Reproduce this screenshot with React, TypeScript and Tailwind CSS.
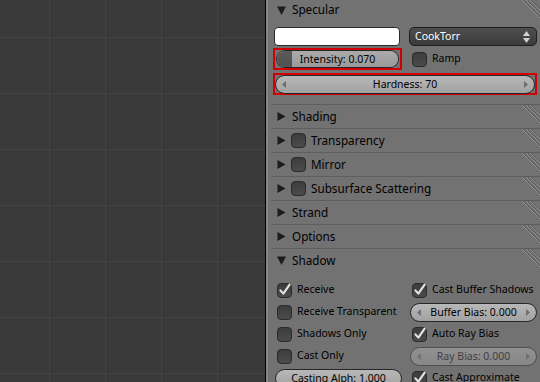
import React from "react";

function Tri({ open }: { open?: boolean }) {
  return (
    <svg width="9" height="9" viewBox="0 0 9 9" className="shrink-0">
      {open ? (
        <polygon points="0,0.5 9,0.5 4.5,9" fill="#1c1c1c" />
      ) : (
        <polygon points="0.5,0 8.5,4.5 0.5,9" fill="#1c1c1c" />
      )}
    </svg>
  );
}

function Hatch() {
  return (
    <svg width="18" height="19" viewBox="0 0 18 19" className="ml-auto shrink-0 self-start">
      {[0, 4, 8].map((x) => (
        <g key={x}>
          <line x1={x} y1="0" x2={x + 19} y2="19" stroke="#929292" strokeWidth="1" />
          <line x1={x + 1.2} y1="0" x2={x + 20.2} y2="19" stroke="#595959" strokeWidth="1" />
        </g>
      ))}
    </svg>
  );
}

function Check({ checked }: { checked?: boolean }) {
  return (
    <div className="relative h-[15px] w-[15px] shrink-0 rounded-[4px] border border-[#2a2a2a] bg-gradient-to-b from-[#3d3d3d] to-[#4b4b4b]">
      {checked ? (
        <svg
          width="15"
          height="15"
          viewBox="0 0 15 15"
          className="absolute -left-px -top-px overflow-visible"
        >
          <path
            d="M3.4 7.4 L6.4 10.6 L12.6 1.6"
            fill="none"
            stroke="#e6e6e6"
            strokeWidth="2.1"
            strokeLinecap="round"
            strokeLinejoin="round"
          />
        </svg>
      ) : null}
    </div>
  );
}

function Arrow({ dir }: { dir: "l" | "r" }) {
  return (
    <svg width="4" height="7" viewBox="0 0 4 7" className="shrink-0">
      <polygon points={dir === "l" ? "4,0 0,3.5 4,7" : "0,0 4,3.5 0,7"} fill="#6e6e6e" />
    </svg>
  );
}

function NumField({
  label,
  arrows = true,
  disabled,
  className = "",
}: {
  label: string;
  arrows?: boolean;
  disabled?: boolean;
  className?: string;
}) {
  return (
    <div
      className={[
        "flex h-[19px] items-center rounded-full border border-[#262626] bg-gradient-to-b from-[#b8b8b8] to-[#a2a2a2] px-[6px] text-[10.5px] text-black",
        disabled ? "opacity-45" : "",
        className,
      ].join(" ")}
    >
      {arrows ? <Arrow dir="l" /> : null}
      <span className="flex-1 whitespace-nowrap text-center leading-none">{label}</span>
      {arrows ? <Arrow dir="r" /> : null}
    </div>
  );
}

function Header({ title, open, check }: { title: string; open?: boolean; check?: boolean }) {
  return (
    <div className="flex h-[24px] items-center border-t border-[#5d5d5d] pl-[6px]">
      <Tri open={open} />
      {check ? (
        <>
          <div className="ml-[5px]">
            <Check />
          </div>
          <span className="ml-[5px] text-[11.7px] text-black">{title}</span>
        </>
      ) : (
        <span className="ml-[6px] text-[11.7px] text-black">{title}</span>
      )}
      <Hatch />
    </div>
  );
}

function CheckRow({ label, checked }: { label: string; checked?: boolean }) {
  return (
    <div className="flex h-[22px] items-center pl-[2px]">
      <Check checked={checked} />
      <span className="ml-[5px] whitespace-nowrap text-[10.5px] text-black">{label}</span>
    </div>
  );
}

export default function App() {
  return (
    <div className="flex h-[382px] w-[540px] overflow-hidden font-['Noto_Sans',sans-serif]">
      <div className="h-full w-[265px] shrink-0 bg-[#393939] bg-[linear-gradient(to_right,#444444_1px,transparent_1px),linear-gradient(to_bottom,#444444_1px,transparent_1px)] bg-[length:56px_56px] bg-[position:49px_37px]" />
      <div className="h-full w-px shrink-0 bg-black" />
      <div className="h-full w-[2px] shrink-0 bg-[#868686]" />

      <div className="h-full flex-1 bg-[#727272] pl-[3px]">
        {/* Specular */}
        <div className="flex h-[20px] items-center pl-[6px]">
          <Tri open />
          <span className="ml-[6px] text-[11.7px] text-black">Specular</span>
          <Hatch />
        </div>
        <div className="pb-[9px] pl-[3px] pt-[7px]">
          <div className="grid h-[19px] grid-cols-[126px_128px] gap-x-[9px]">
            <div className="rounded-[4px] border border-[#2a2a2a] bg-white" />
            <div className="flex items-center rounded-[5px] border border-[#1e1e1e] bg-gradient-to-b from-[#4e4e4e] to-[#3b3b3b] pl-[5px] pr-[6px] text-[10.5px] text-white">
              <span className="flex-1">CookTorr</span>
              <svg width="7" height="12" viewBox="0 0 7 12">
                <polygon points="0,5 3.5,0 7,5" fill="#d2d2d2" />
                <polygon points="0,7 3.5,12 7,7" fill="#d2d2d2" />
              </svg>
            </div>
          </div>
          <div className="mt-[2px] grid h-[22px] grid-cols-[126px_128px] gap-x-[9px]">
            <div className="-ml-px w-[129px] border-2 border-[#d20000] px-px">
              <div className="flex h-[18px] overflow-hidden rounded-full border border-[#262626] text-[10.5px] text-black">
                <div className="relative flex flex-1 items-center justify-center bg-gradient-to-b from-[#ababab] to-[#9a9a9a]">
                  <div className="absolute inset-y-0 left-0 w-[15px] bg-gradient-to-b from-[#5a5a5a] to-[#515151]" />
                  <span className="relative leading-none">Intensity: 0.070</span>
                </div>
              </div>
            </div>
            <div className="flex items-center pl-[3px]">
              <Check />
              <span className="ml-[5px] text-[10.5px] text-black">Ramp</span>
            </div>
          </div>
          <div className="mt-[3px] h-[22px] w-[264px] -ml-px border-2 border-[#d20000]">
            <NumField label="Hardness: 70" className="h-[18px]" />
          </div>
        </div>

        <Header title="Shading" />
        <Header title="Transparency" check />
        <Header title="Mirror" check />
        <Header title="Subsurface Scattering" check />
        <Header title="Strand" />
        <Header title="Options" />
        <Header title="Shadow" open />

        {/* Shadow */}
        <div className="grid grid-cols-[127px_127px] gap-x-[8px] pl-[4px] pt-[7px]">
          <CheckRow label="Receive" checked />
          <CheckRow label="Cast Buffer Shadows" checked />
          <CheckRow label="Receive Transparent" />
          <div className="flex h-[22px] items-center">
            <NumField label="Buffer Bias: 0.000" className="w-full" />
          </div>
          <CheckRow label="Shadows Only" />
          <CheckRow label="Auto Ray Bias" checked />
          <CheckRow label="Cast Only" />
          <div className="flex h-[22px] items-center">
            <NumField label="Ray Bias: 0.000" disabled className="w-full" />
          </div>
          <div className="flex h-[22px] items-center">
            <NumField label="Casting Alph: 1.000" arrows={false} className="w-full" />
          </div>
          <CheckRow label="Cast Approximate" checked />
        </div>
      </div>
    </div>
  );
}
